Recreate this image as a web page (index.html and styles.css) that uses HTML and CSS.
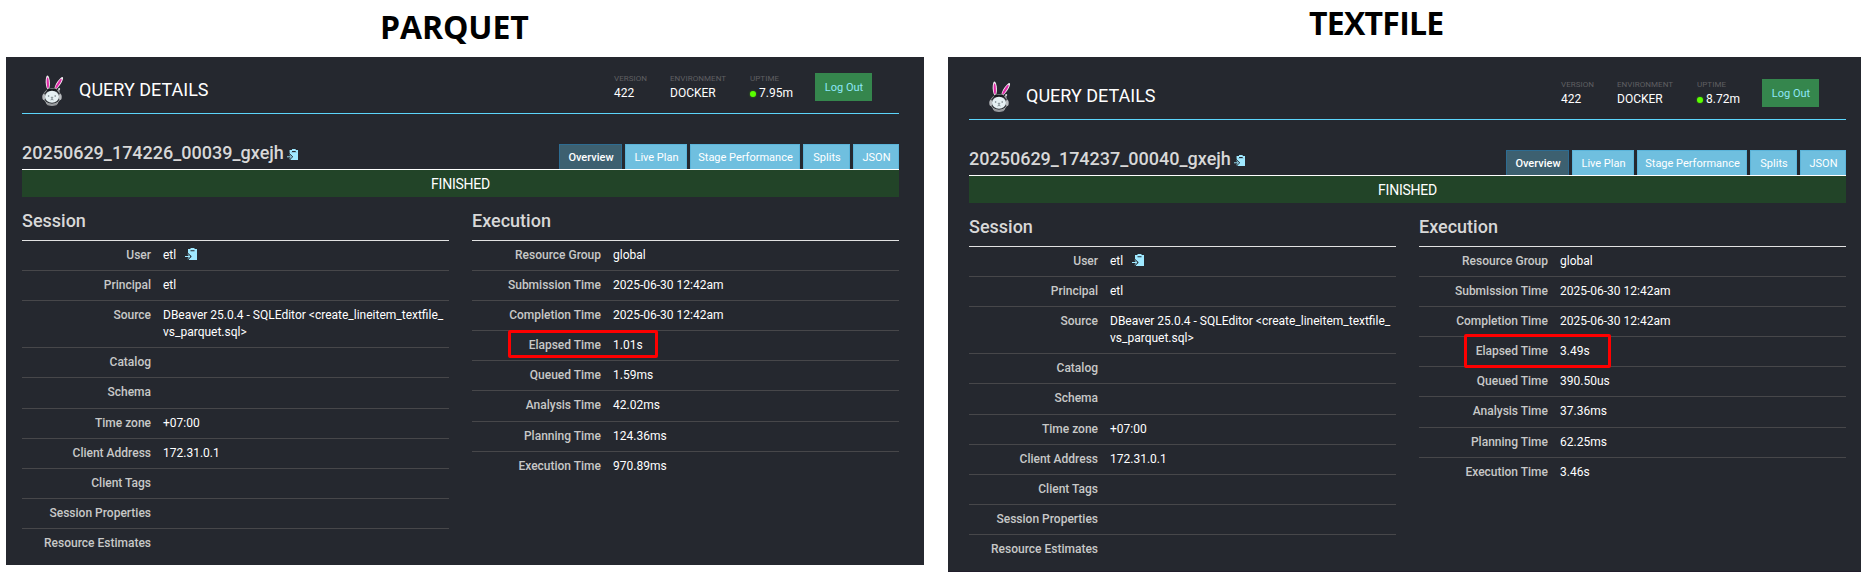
FILE: index.html
```html
<!DOCTYPE html>
<html lang="en">
<head>
<meta charset="utf-8">
<title>Query details: Parquet and Textfile</title>
<link rel="stylesheet" href="styles.css">
</head>
<body>
<svg class="defs" aria-hidden="true">
  <symbol id="bunny" viewBox="0 0 22 31">
    <ellipse cx="5.8" cy="7.5" rx="2.1" ry="7" fill="#f4eef3" transform="rotate(-3 5.8 7.5)"/>
    <ellipse cx="5.8" cy="8" rx="1.1" ry="5.4" fill="#e02aa8" transform="rotate(-3 5.8 8)"/>
    <ellipse cx="16.8" cy="8.2" rx="2" ry="7.2" fill="#f4eef3" transform="rotate(33 16.8 8.2)"/>
    <ellipse cx="16.5" cy="8.6" rx="1.1" ry="5.6" fill="#e02aa8" transform="rotate(33 16.5 8.6)"/>
    <path d="M16.8 17.5V14.2" stroke="#c9cccf" stroke-width="1.2"/>
    <circle cx="17.2" cy="14" r="1" fill="#d8dadc"/>
    <ellipse cx="10" cy="21.5" rx="8.6" ry="8" fill="#33363b" stroke="#8d9093"/>
    <path d="M6 13.8h8l1.5 2.2h-11z" fill="#17191d"/>
    <ellipse cx="1.8" cy="22" rx="1.5" ry="3" fill="#b9bcbf"/>
    <ellipse cx="18.2" cy="22" rx="1.5" ry="3" fill="#b9bcbf"/>
    <path d="M4 27.5q6 3.4 12 0l-1.5 2.3q-4.5 1.6-9 0z" fill="#85888c" stroke="#b0b3b6" stroke-width=".7"/>
    <ellipse cx="10" cy="21.7" rx="7" ry="6" fill="#e6f0f3"/>
    <circle cx="6.6" cy="21" r=".8" fill="#6d787e"/>
    <circle cx="13.2" cy="21" r=".8" fill="#6d787e"/>
    <path d="M9 22.3h2l-1 1zM10 23v1.5M8.5 25q1.5-.2 1.5-1 0 .8 1.5 1" fill="none" stroke="#6d787e" stroke-width=".7"/>
  </symbol>
  <symbol id="copy" viewBox="0 0 12 12">
    <path d="M3 1h9v11H4l-.5-1L6 8.500 3 5.500z" fill="#9fe8ff"/>
    <path d="M4.500 0h6v4h-6z" fill="#25282f"/>
    <path d="M3 1h2.500v3H3zM9.500 1H12v3H9.500zM5.500 0h4v2.200h-4z M5 3.200h5V4H5z" fill="#9fe8ff"/>
    <path d="M2.500 5l3.800 3.500L2.500 12" fill="none" stroke="#25282f" stroke-width="1"/>
    <path d="M0 8.500h5M2.700 6.300l2.300 2.200-2.300 2.200" fill="none" stroke="#9fe8ff" stroke-width="1"/>
  </symbol>
</svg>
<main class="compare">
  <section class="side side-parquet">
    <h1 class="side-title"><span>PARQUET</span></h1>
    <div class="panel">
      <header class="nav">
        <svg class="logo"><use href="#bunny"/></svg>
        <span class="nav-title">QUERY DETAILS</span>
        <div class="stat version"><small>VERSION</small><span>422</span></div>
        <div class="stat environment"><small>ENVIRONMENT</small><span>DOCKER</span></div>
        <div class="stat uptime"><small>UPTIME</small><span><i class="dot"></i>7.95m</span></div>
        <a class="logout">Log Out</a>
      </header>
      <div class="query-head">
        <h2 class="query-id">20250629_174226_00039_gxejh</h2>
        <svg class="copy copy-id"><use href="#copy"/></svg>
        <nav class="tabs"><a class="tab t1 active">Overview</a><a class="tab t2">Live Plan</a><a class="tab t3">Stage Performance</a><a class="tab t4">Splits</a><a class="tab t5">JSON</a></nav>
      </div>
      <div class="status">FINISHED</div>
      <div class="columns">
        <div class="column">
          <h3>Session</h3>
          <div class="row"><b>User</b><span>etl<svg class="copy copy-user"><use href="#copy"/></svg></span></div>
          <div class="row"><b>Principal</b><span>etl</span></div>
          <div class="row tall"><b>Source</b><span>DBeaver 25.0.4 - SQLEditor &lt;create_lineitem_textfile_<wbr>vs_parquet.sql&gt;</span></div>
          <div class="row"><b>Catalog</b></div>
          <div class="row"><b>Schema</b></div>
          <div class="row"><b>Time zone</b><span>+07:00</span></div>
          <div class="row"><b>Client Address</b><span>172.31.0.1</span></div>
          <div class="row"><b>Client Tags</b></div>
          <div class="row"><b>Session Properties</b></div>
          <div class="row"><b>Resource Estimates</b></div>
        </div>
        <div class="column">
          <h3>Execution</h3>
          <div class="row"><b>Resource Group</b><span>global</span></div>
          <div class="row"><b>Submission Time</b><span>2025-06-30 12:42am</span></div>
          <div class="row"><b>Completion Time</b><span>2025-06-30 12:42am</span></div>
          <div class="row"><b>Elapsed Time</b><span>1.01s</span></div>
          <div class="row"><b>Queued Time</b><span>1.59ms</span></div>
          <div class="row"><b>Analysis Time</b><span>42.02ms</span></div>
          <div class="row"><b>Planning Time</b><span>124.36ms</span></div>
          <div class="row"><b>Execution Time</b><span>970.89ms</span></div>
        </div>
      </div>
      <div class="mark"></div>
    </div>
  </section>
  <section class="side side-textfile">
    <h1 class="side-title"><span>TEXTFILE</span></h1>
    <div class="panel">
      <header class="nav">
        <svg class="logo"><use href="#bunny"/></svg>
        <span class="nav-title">QUERY DETAILS</span>
        <div class="stat version"><small>VERSION</small><span>422</span></div>
        <div class="stat environment"><small>ENVIRONMENT</small><span>DOCKER</span></div>
        <div class="stat uptime"><small>UPTIME</small><span><i class="dot"></i>8.72m</span></div>
        <a class="logout">Log Out</a>
      </header>
      <div class="query-head">
        <h2 class="query-id">20250629_174237_00040_gxejh</h2>
        <svg class="copy copy-id"><use href="#copy"/></svg>
        <nav class="tabs"><a class="tab t1 active">Overview</a><a class="tab t2">Live Plan</a><a class="tab t3">Stage Performance</a><a class="tab t4">Splits</a><a class="tab t5">JSON</a></nav>
      </div>
      <div class="status">FINISHED</div>
      <div class="columns">
        <div class="column">
          <h3>Session</h3>
          <div class="row"><b>User</b><span>etl<svg class="copy copy-user"><use href="#copy"/></svg></span></div>
          <div class="row"><b>Principal</b><span>etl</span></div>
          <div class="row tall"><b>Source</b><span>DBeaver 25.0.4 - SQLEditor &lt;create_lineitem_textfile_<wbr>vs_parquet.sql&gt;</span></div>
          <div class="row"><b>Catalog</b></div>
          <div class="row"><b>Schema</b></div>
          <div class="row"><b>Time zone</b><span>+07:00</span></div>
          <div class="row"><b>Client Address</b><span>172.31.0.1</span></div>
          <div class="row"><b>Client Tags</b></div>
          <div class="row"><b>Session Properties</b></div>
          <div class="row"><b>Resource Estimates</b></div>
        </div>
        <div class="column">
          <h3>Execution</h3>
          <div class="row"><b>Resource Group</b><span>global</span></div>
          <div class="row"><b>Submission Time</b><span>2025-06-30 12:42am</span></div>
          <div class="row"><b>Completion Time</b><span>2025-06-30 12:42am</span></div>
          <div class="row"><b>Elapsed Time</b><span>3.49s</span></div>
          <div class="row"><b>Queued Time</b><span>390.50us</span></div>
          <div class="row"><b>Analysis Time</b><span>37.36ms</span></div>
          <div class="row"><b>Planning Time</b><span>62.25ms</span></div>
          <div class="row"><b>Execution Time</b><span>3.46s</span></div>
        </div>
      </div>
      <div class="mark"></div>
    </div>
  </section>
</main>
</body>
</html>
```

FILE: styles.css
```css
* { box-sizing: border-box; }
body {
  margin: 0;
  background: #fff;
  color: #fff;
  font: 12px/17.143px Roboto, "Liberation Sans", sans-serif;
  overflow: hidden;
}
.defs { position: absolute; width: 0; height: 0; }
.compare { display: flex; gap: 24px; padding-left: 6px; }
.side-parquet { width: 918px; }
.side-textfile { width: 913px; }
.side-title {
  margin: 0;
  height: 57px;
  color: #000;
  font: bold 32px/40px "Open Sans", "Noto Sans", sans-serif;
  white-space: nowrap;
}
.side-title span { display: inline-block; transform-origin: 0 50%; }
.side-parquet .side-title { padding: 7px 0 0 374px; letter-spacing: -0.1px; }
.side-textfile .side-title { padding: 3px 0 0 361px; letter-spacing: -0.75px; }

.panel { position: relative; background: #25282f; height: 508px; padding: 0 25px 0 16px; }
.side-textfile .panel { height: 515px; padding: 6px 15px 0 21px; border-bottom: 1px solid #211d2b; }

.nav {
  display: flex;
  height: 57px;
  border-bottom: 1px solid #5cd5fb;
  padding: 16px 27px 0 20px;
}
.logo { width: 22px; height: 31px; margin-top: 2px; }
.nav-title { margin: 7px 0 0 15px; width: 130px; font-size: 18px; line-height: 20px; white-space: nowrap; }
.stat { display: flex; flex-direction: column; padding-top: 1px; white-space: nowrap; }
.stat small { font-size: 8px; line-height: 10px; color: #5f5f62; letter-spacing: 0.05px; }
.stat span { line-height: 18px; }
.version { margin-left: auto; width: 56px; }
.environment { width: 80px; }
.uptime { width: 65px; }
.dot {
  display: inline-block;
  width: 6px;
  height: 6px;
  margin-right: 3px;
  border-radius: 50%;
  background: #5aff00;
  box-shadow: 0 0 2px #3c9c0c;
}
.logout {
  width: 57px;
  height: 28px;
  background: #35864d;
  color: #8ee6f8;
  font-size: 11px;
  line-height: 29px;
  padding-left: 1px;
  text-align: center;
}

.query-head { display: flex; height: 56px; border-bottom: 1px solid #fff; }
.query-id { margin: 29px 0 0; font-size: 18px; line-height: 20px; font-weight: 500; color: #d8d8d8; white-space: nowrap; }
.copy-id { width: 11px; height: 11px; margin: 35px 0 0 3px; }
.tabs { display: flex; gap: 3px; margin: 30px 0 0 auto; }
.tab {
  height: 25px;
  border: 1px solid #5bb4da;
  border-bottom: 0;
  background: #6fbfdf;
  font-size: 11px;
  line-height: 26px;
  padding-left: 1px;
  text-align: center;
  white-space: nowrap;
}
.t1 { width: 63px; }
.t2 { width: 62px; }
.t3 { width: 110px; }
.t4 { width: 47px; }
.t5 { width: 46px; }
.active { background: #3d6070; border-color: #2d6c92; font-weight: 500; }

.status { height: 27px; background: #224428; font-size: 14px; line-height: 28px; letter-spacing: -0.25px; text-align: center; }

.columns { display: flex; gap: 23px; }
.column { width: 427px; }
.column h3 {
  margin: 0;
  height: 43.74px;
  padding-top: 14px;
  border-bottom: 1px solid #e2e2e2;
  color: #d8d8d8;
  font-size: 18px;
  line-height: 20px;
  font-weight: 500;
}
.row { display: flex; gap: 12px; height: 30.143px; padding-top: 6px; border-bottom: 1px solid #47474a; }
.row:last-child { border-bottom: 0; }
.tall { height: 47.286px; }
.row b { width: 129px; font-weight: 500; text-align: right; color: #c8c8c8; white-space: nowrap; }
.row span { flex: 1; }
.copy-user { width: 12px; height: 12px; margin-left: 9px; vertical-align: -1px; }

.mark { position: absolute; border: 3px solid #f00; border-radius: 2px; }
.side-parquet .mark { left: 502px; top: 273px; width: 150px; height: 28px; }
.side-textfile .mark { left: 516px; top: 277px; width: 147px; height: 34px; }
```
